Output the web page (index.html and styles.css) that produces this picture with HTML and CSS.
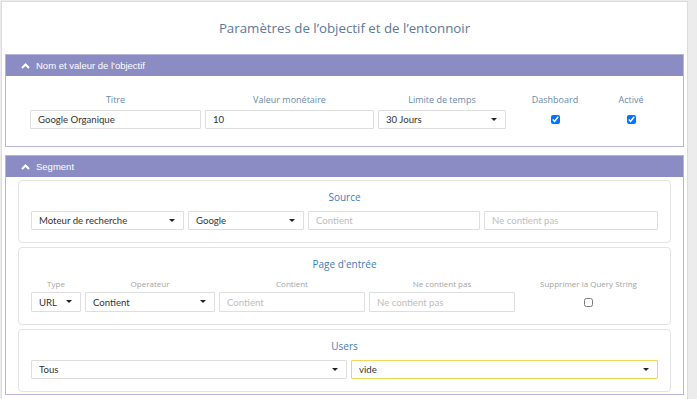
FILE: index.html
```html
<!DOCTYPE html>
<html lang="fr">
<head>
    <meta charset="UTF-8">
    <meta name="viewport" content="width=device-width, initial-scale=1.0">
    <title>Paramètres de l'objectif</title>
    <link rel="stylesheet" href="styles.css">
</head>
<body>
    <div class="page">
        <h1 class="title">Paramètres de l’objectif et de l’entonnoir</h1>

        <div class="panel">
            <div class="panel-heading">
                <svg class="chevron" width="9" height="6" viewBox="0 0 9 6"><polyline points="1,5 4.5,1.5 8,5" fill="none" stroke="#fff" stroke-width="2"/></svg>
                Nom et valeur de l'objectif
            </div>
            <div class="panel-body goal">
                <div class="goal-grid">
                    <label class="lbl">Titre</label>
                    <label class="lbl">Valeur monétaire</label>
                    <label class="lbl">Limite de temps</label>
                    <label class="lbl">Dashboard</label>
                    <label class="lbl">Activé</label>

                    <input class="field" type="text" value="Google Organique">
                    <input class="field" type="text" value="10">
                    <div class="sel"><select class="field"><option>30 Jours</option></select></div>
                    <div class="check"><input type="checkbox" checked></div>
                    <div class="check"><input type="checkbox" checked></div>
                </div>
            </div>
        </div>

        <div class="panel">
            <div class="panel-heading">
                <svg class="chevron" width="9" height="6" viewBox="0 0 9 6"><polyline points="1,5 4.5,1.5 8,5" fill="none" stroke="#fff" stroke-width="2"/></svg>
                Segment
            </div>
            <div class="panel-body segment">
                <div class="box">
                    <h4 class="box-title">Source</h4>
                    <div class="row source-row">
                        <div class="sel"><select class="field"><option>Moteur de recherche</option></select></div>
                        <div class="sel"><select class="field"><option>Google</option></select></div>
                        <input class="field" type="text" placeholder="Contient">
                        <input class="field" type="text" placeholder="Ne contient pas">
                    </div>
                </div>

                <div class="box">
                    <h4 class="box-title">Page d'entrée</h4>
                    <div class="row page-row">
                        <label class="sublbl">Type</label>
                        <label class="sublbl">Operateur</label>
                        <label class="sublbl">Contient</label>
                        <label class="sublbl">Ne contient pas</label>
                        <label class="sublbl">Supprimer la Query String</label>

                        <div class="sel"><select class="field"><option>URL</option></select></div>
                        <div class="sel"><select class="field"><option>Contient</option></select></div>
                        <input class="field" type="text" placeholder="Contient">
                        <input class="field" type="text" placeholder="Ne contient pas">
                        <div class="check"><input type="checkbox"></div>
                    </div>
                </div>

                <div class="box">
                    <h4 class="box-title">Users</h4>
                    <div class="row users-row">
                        <div class="sel"><select class="field"><option>Tous</option></select></div>
                        <div class="sel"><select class="field focus"><option>vide</option></select></div>
                    </div>
                </div>
            </div>
        </div>
    </div>
</body>
</html>
```

FILE: styles.css
```css
body {
    margin: 0;
    padding: 1px 9px 0 1px;
    background-color: #ececec;
    font-family: "Open Sans", sans-serif;
}
.page {
    background: white;
    border: 1px solid #dcdcdc;
    border-bottom: none;
    padding: 0 3px 8px 3px;
    height: 398px;
    box-sizing: border-box;
}
.title {
    margin: 0;
    height: 52px;
    line-height: 52px;
    text-align: center;
    font-size: 13.3px;
    font-weight: normal;
    color: #5a7a98;
}
.panel {
    border: 1px solid #b7b5db;
    margin-bottom: 8px;
}
.panel-heading {
    background-color: #8a8cc3;
    color: white;
    height: 21px;
    line-height: 21px;
    padding-left: 15px;
    font-family: "Liberation Sans", Arial, sans-serif;
    font-size: 9.5px;
    display: flex;
    align-items: center;
    gap: 6px;
}
.chevron {
    display: block;
}
.panel-body.goal {
    padding: 18px 0 17px 24px;
}
.goal-grid {
    display: grid;
    grid-template-columns: 171px 169px 128px 90px 54px;
    column-gap: 4px;
    row-gap: 4px;
    align-items: center;
}
.lbl {
    text-align: center;
    font-size: 9px;
    line-height: 12px;
    color: #6a89aa;
}
.field {
    display: block;
    box-sizing: border-box;
    width: 100%;
    height: 19px;
    line-height: 17px;
    border: 1px solid #dedede;
    border-radius: 1px;
    padding: 0 7px;
    margin: 0;
    font-family: Lato, "Open Sans", sans-serif;
    font-size: 9.6px;
    color: #333;
    background: white;
    outline: none;
}
.field::placeholder {
    color: #bdbdbd;
}
select.field {
    appearance: none;
    -webkit-appearance: none;
}
.sel {
    position: relative;
}
.sel::after {
    content: "";
    position: absolute;
    right: 9px;
    top: 8px;
    border-left: 3px solid transparent;
    border-right: 3px solid transparent;
    border-top: 3px solid #222;
    pointer-events: none;
}
.field.focus {
    border-color: #f3d65c;
}
.check {
    display: flex;
    justify-content: center;
}
.check input {
    width: 9px;
    height: 9px;
    margin: 0;
}
.panel-body.segment {
    padding: 3px 12px 2px 12px;
    display: flex;
    flex-direction: column;
    gap: 4px;
}
.box {
    border: 1px solid #e4e4e4;
    border-radius: 4px;
    padding: 9px 12px 12px 12px;
}
.box-title {
    margin: 0 0 7px 0;
    text-align: center;
    font-size: 10px;
    font-weight: normal;
    line-height: 14px;
    color: #3f7cb9;
}
.row {
    display: grid;
    column-gap: 4px;
    align-items: center;
}
.source-row {
    grid-template-columns: 153px 116px 172px 1fr;
}
.page-row {
    grid-template-columns: 50px 130px 146px 146px 1fr;
    row-gap: 2px;
}
.page-row .field {
    height: 20px;
}
.sublbl {
    text-align: center;
    font-size: 8px;
    line-height: 12px;
    color: #a3a3a3;
}
.users-row {
    grid-template-columns: 316px 1fr;
}
```
